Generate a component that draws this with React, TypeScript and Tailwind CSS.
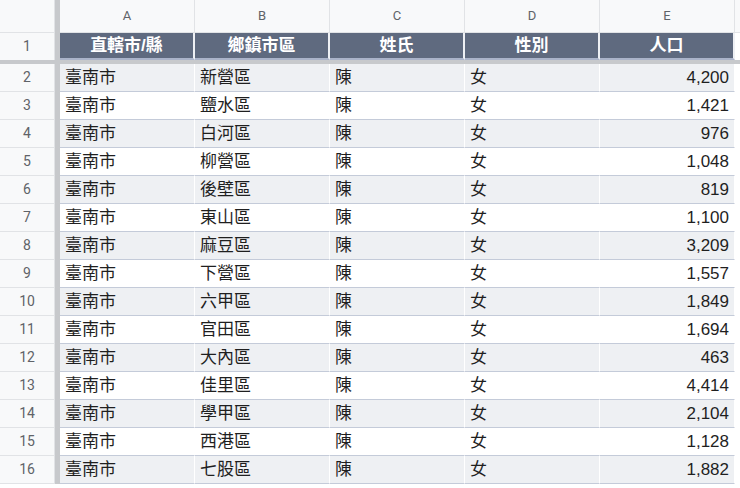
import { memo } from 'react';

const COLUMNS = ['A', 'B', 'C', 'D', 'E'];
const HEADERS = ['直轄市/縣', '鄉鎮市區', '姓氏', '性別', '人口'];

const ROWS: [string, string, string, string, string][] = [
  ['臺南市', '新營區', '陳', '女', '4,200'],
  ['臺南市', '鹽水區', '陳', '女', '1,421'],
  ['臺南市', '白河區', '陳', '女', '976'],
  ['臺南市', '柳營區', '陳', '女', '1,048'],
  ['臺南市', '後壁區', '陳', '女', '819'],
  ['臺南市', '東山區', '陳', '女', '1,100'],
  ['臺南市', '麻豆區', '陳', '女', '3,209'],
  ['臺南市', '下營區', '陳', '女', '1,557'],
  ['臺南市', '六甲區', '陳', '女', '1,849'],
  ['臺南市', '官田區', '陳', '女', '1,694'],
  ['臺南市', '大內區', '陳', '女', '463'],
  ['臺南市', '佳里區', '陳', '女', '4,414'],
  ['臺南市', '學甲區', '陳', '女', '2,104'],
  ['臺南市', '西港區', '陳', '女', '1,128'],
  ['臺南市', '七股區', '陳', '女', '1,882'],
];

const FONT = "font-['Liberation_Sans','Noto_Sans_CJK_TC',sans-serif]";

const RowHeader = ({ label, className = '' }: { label: string; className?: string }) => (
  <div
    className={`flex w-[55px] shrink-0 items-center justify-center border-b border-r border-[#e1e3e6] bg-[#f8f9fa] font-['Roboto',sans-serif] text-[14px] text-[#5f6368] ${className}`}
  >
    {label}
  </div>
);

export default memo(function App() {
  return (
    <div className={`h-[488px] w-[740px] overflow-hidden bg-white ${FONT}`}>
      {/* column letters */}
      <div className="flex h-[33px]">
        <RowHeader label="" />
        <div className="w-[5px] shrink-0 bg-[#c7c9cc]" />
        {COLUMNS.map((c) => (
          <div
            className="flex w-[135px] shrink-0 items-center justify-center border-b border-r border-[#e1e3e6] bg-[#f8f9fa] font-['Roboto',sans-serif] text-[13px] text-[#5f6368]"
            key={c}
          >
            {c}
          </div>
        ))}
        <div className="flex-1 border-b border-[#e1e3e6] bg-[#f8f9fa]" />
      </div>

      {/* header row */}
      <div className="flex h-[27px]">
        <RowHeader label="1" className="border-b-0" />
        <div className="w-[5px] shrink-0 bg-[#c7c9cc]" />
        {HEADERS.map((h) => (
          <div
            className="flex w-[135px] shrink-0 items-center justify-center border-b-2 border-r-2 border-b-[#aab3c9] border-r-[#eef0f4] bg-[#5f6a7f] text-[17px] font-bold text-white"
            key={h}
          >
            {h}
          </div>
        ))}
        <div className="flex-1 bg-white" />
      </div>

      {/* frozen divider */}
      <div className="h-[4px] bg-[#c7c9cc]" />

      {ROWS.map((row, i) => {
        const shaded = i % 2 === 0;
        return (
          <div className="flex h-[28px]" key={i}>
            <RowHeader label={String(i + 2)} />
            <div className="w-[5px] shrink-0 bg-[#c7c9cc]" />
            {row.map((cell, j) => (
              <div
                className={`flex w-[135px] shrink-0 items-end border-b border-r border-b-[#c4cbd9] border-r-white px-[5px] pb-[2px] text-[17px] leading-[22px] text-[#1f1f1f] ${
                  shaded ? 'bg-[#eef0f3]' : 'bg-white'
                } ${j === 4 ? 'justify-end' : 'justify-start'}`}
                key={j}
              >
                {cell}
              </div>
            ))}
            <div className="flex-1 bg-white" />
          </div>
        );
      })}
    </div>
  );
});
